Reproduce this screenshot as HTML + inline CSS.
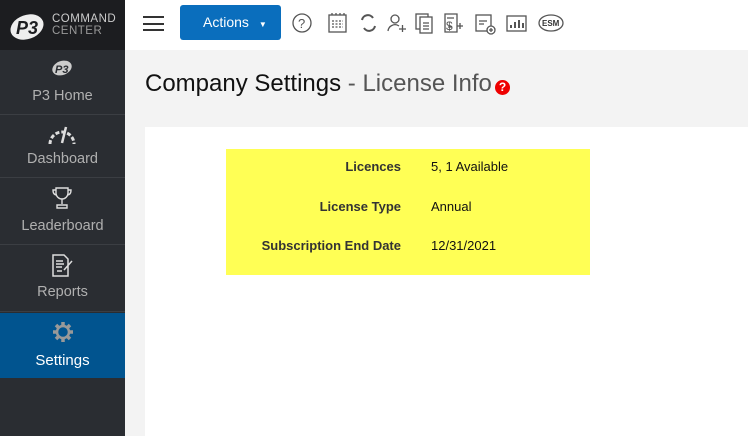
<!DOCTYPE html>
<html><head><meta charset="utf-8"><style>
*{margin:0;padding:0;box-sizing:border-box}
body{width:748px;height:436px;overflow:hidden;background:#f3f3f3;font-family:"Liberation Sans",sans-serif;position:relative}
.side{position:absolute;left:0;top:0;width:125px;height:436px;background:#2a2d32}
.logo{height:50px;background:#1c1d20;position:relative}
.item{position:absolute;left:0;width:125px;border-bottom:1px solid #3b3e43;color:#b0b0b0;font-size:14.5px;text-align:center}
.item .lbl{position:absolute;left:0;right:0}
.top{position:absolute;left:125px;top:0;right:0;height:50px;background:#fff}
.card{position:absolute;left:145px;top:127px;right:0;bottom:0;background:#fff}
.yel{position:absolute;left:226px;top:149px;width:364px;height:126px;background:#ffff55}
.r{position:absolute;font-size:13px;color:#111}
.k{right:189px;text-align:right;font-weight:bold;color:#333}
.v{left:205px}
svg{position:absolute}
</style></head><body>
<div class="side">
 <div class="logo">
  <svg style="left:9px;top:12px" width="36" height="30" viewBox="0 0 36 30"><ellipse cx="18" cy="15" rx="17" ry="12" transform="rotate(-20 18 15)" fill="#eee"/><text x="7" y="22" font-size="18" font-style="italic" font-weight="bold" fill="#1c1d20" font-family="Liberation Sans">P3</text></svg>
  <div style="position:absolute;left:52px;top:13px;color:#ccc;font-size:11.5px;line-height:12px;letter-spacing:.5px">COMMAND<br><span style="color:#999">CENTER</span></div>
 </div>
 <div class="item" style="top:50px;height:65px">
  <svg style="left:51px;top:9px" width="22" height="18" viewBox="0 0 22 18"><ellipse cx="11" cy="9" rx="10" ry="7" transform="rotate(-20 11 9)" fill="#ccc"/><text x="4" y="14" font-size="11" font-style="italic" font-weight="bold" fill="#2a2d32">P3</text></svg>
  <div class="lbl" style="top:38px">P3 Home</div></div>
 <div class="item" style="top:115px;height:63px">
  <svg style="left:47px;top:9px" width="30" height="22" viewBox="0 0 30 22"><path d="M3 20 A12 12 0 0 1 27 20" fill="none" stroke="#ddd" stroke-width="3" stroke-dasharray="4 2"/><path d="M15 19 L19 3" stroke="#ddd" stroke-width="2.5"/></svg>
  <div class="lbl" style="top:36px">Dashboard</div></div>
 <div class="item" style="top:178px;height:67px">
  <svg style="left:52px;top:8px" width="20" height="24" viewBox="0 0 20 24" fill="none" stroke="#ddd" stroke-width="1.4"><path d="M4 2h12v5a6 6 0 0 1-12 0z M4 4H1q0 5 4 5 M16 4h3q0 5-4 5 M10 13v5 M5 22h10v-3H5z"/></svg>
  <div class="lbl" style="top:40px">Leaderboard</div></div>
 <div class="item" style="top:245px;height:67px">
  <svg style="left:51px;top:9px" width="24" height="24" viewBox="0 0 24 24" fill="none" stroke="#ddd" stroke-width="1.5"><path d="M2 1h11l4 4v17H2z M5 7h7 M5 10h8 M5 13h6 M6 17h5 M13 16l8-9"/></svg>
  <div class="lbl" style="top:39px">Reports</div></div>
 <div class="item" style="top:313px;height:65px;background:#01548f;color:#fff;border:none">
  <svg style="left:51px;top:7px" width="24" height="24" viewBox="0 0 24 24"><circle cx="12" cy="12" r="6" fill="none" stroke="#999" stroke-width="2.5"/><g stroke="#999" stroke-width="3.5"><path d="M12 2v4M12 18v4M2 12h4M18 12h4M5 5l3 3M16 16l3 3M5 19l3-3M16 8l3-3"/></g></svg>
  <div class="lbl" style="top:39px;font-size:15px">Settings</div></div>
</div>
<div class="top">
 <div style="position:absolute;left:18px;top:16px;width:21px;height:15px;border-top:2px solid #333;border-bottom:2px solid #333"><div style="margin-top:4.5px;height:2px;background:#333"></div></div>
 <div style="position:absolute;left:55px;top:5px;width:101px;height:35px;background:#0a6ebd;border-radius:3px;color:#fff;font-size:14px;line-height:35px;padding-left:23px">Actions <span style="font-size:8px;margin-left:6px">&#9660;</span></div>
 <svg style="left:167px;top:11px" width="290" height="24" viewBox="0 0 290 24" fill="none" stroke="#555" stroke-width="1.3">
  <circle cx="10" cy="12" r="9"/><text x="6" y="17" font-size="13" fill="#555" stroke="none">?</text>
  <rect x="37" y="4" width="17" height="17"/><path d="M40 2v3M44 2v3M48 2v3M52 2v3M40 10h11M40 13h11M40 16h11" stroke-dasharray="2 1.5"/>
  <path d="M70 9a6 6 0 0 1 11-2M83 15a6 6 0 0 1-11 2" stroke-width="2"/>
  <circle cx="103" cy="8" r="4"/><path d="M96 20a7 7 0 0 1 11-5M107 18h7M110.5 14v7"/>
  <rect x="124" y="3" width="12" height="15"/><rect x="128" y="6" width="12" height="16" fill="#fff"/><path d="M131 12h6M131 15h6M131 18h6"/>
  <path d="M153 3h12v18h-12z M155 7h7 M156 16h4"/><text x="154" y="19" font-size="12" fill="#555" stroke="none">$</text><path d="M165 15h6M168 12v6"/>
  <rect x="184" y="4" width="15" height="16"/><path d="M187 10h8M187 13h5"/><circle cx="199" cy="19" r="4" fill="#fff"/><path d="M197 19h4M199 17v4"/>
  <rect x="215" y="5" width="19" height="15"/><path d="M219 17v-3M223 17v-6M227 17v-8M231 17v-5" stroke-width="2"/>
  <ellipse cx="259" cy="12" rx="12" ry="8"/><text x="250" y="15" font-size="8" font-weight="bold" fill="#333" stroke="none">ESM</text>
 </svg>
</div>
<div style="position:absolute;left:145px;top:70px;font-size:24px;color:#111;white-space:nowrap">Company Settings <span style="color:#555">- License Info</span></div>
<div style="position:absolute;left:495px;top:80px;width:15px;height:15px;border-radius:50%;background:#e00;color:#fff;font-size:12px;font-weight:bold;text-align:center;line-height:15px">?</div>
<div class="card"></div>
<div class="yel">
 <div class="r k" style="top:10px">Licences</div><div class="r v" style="top:10px">5, 1 Available</div>
 <div class="r k" style="top:50px">License Type</div><div class="r v" style="top:50px">Annual</div>
 <div class="r k" style="top:89px">Subscription End Date</div><div class="r v" style="top:89px">12/31/2021</div>
</div>
</body></html>
